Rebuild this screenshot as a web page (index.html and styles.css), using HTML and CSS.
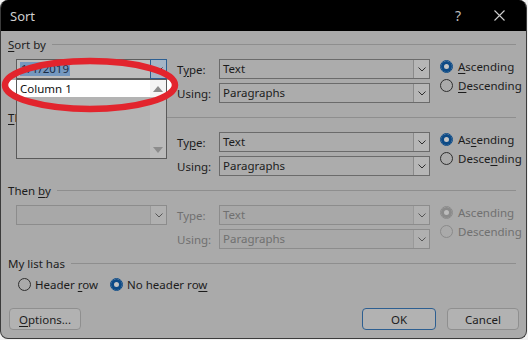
FILE: index.html
```html
<!DOCTYPE html>
<html lang="en">
  <head>
    <meta charset="UTF-8" />
    <title>Sort</title>
    <link rel="stylesheet" href="styles.css">
  </head>
  <body>
    <div class="window">
      <div class="titlebar">
        <span class="title">Sort</span>
        <span class="help">?</span>
        <svg class="close" width="11" height="11" viewBox="0 0 11 11">
          <path d="M0.5 0.5 L10.5 10.5 M10.5 0.5 L0.5 10.5" stroke="#cfcfcf" stroke-width="1.1" fill="none" />
        </svg>
      </div>

      <div class="content">
        <!-- sort by -->
        <div class="section">
          <div class="header"><span><u>S</u>ort by</span><i></i></div>
          <div class="body">
            <div class="dropdown open">
              <span class="value"><span class="sel">1/1/2019</span></span>
              <span class="arrow"><svg width="8" height="5" viewBox="0 0 8 5"><path d="M0.5 0.5 L4 4 L7.5 0.5" stroke="#2d2d2d" fill="none" /></svg></span>
              <div class="listbox">
                <div class="items">
                  <div class="item">Column 1</div>
                </div>
                <div class="scroll">
                  <span class="up"><svg width="10" height="6" viewBox="0 0 10 6"><path d="M0 6 L5 0 L10 6 Z" fill="#8c8c8c" /></svg></span>
                  <span class="down"><svg width="10" height="6" viewBox="0 0 10 6"><path d="M0 0 L5 6 L10 0 Z" fill="#8c8c8c" /></svg></span>
                </div>
              </div>
            </div>
            <span class="lbl r1">T<u>y</u>pe:</span>
            <div class="combo r1"><span class="value">Text</span><span class="arrow"><svg width="8" height="5" viewBox="0 0 8 5"><path d="M0.5 0.5 L4 4 L7.5 0.5" stroke="#2d2d2d" fill="none" /></svg></span></div>
            <div class="radios">
              <div class="radio"><span class="dot on"></span><span><u>A</u>scending</span></div>
              <div class="radio"><span class="dot"></span><span><u>D</u>escending</span></div>
            </div>
            <span class="lbl r2">Using:</span>
            <div class="combo r2"><span class="value">Paragraphs</span><span class="arrow"><svg width="8" height="5" viewBox="0 0 8 5"><path d="M0.5 0.5 L4 4 L7.5 0.5" stroke="#2d2d2d" fill="none" /></svg></span></div>
          </div>
        </div>

        <!-- then by -->
        <div class="section">
          <div class="header"><span><u>T</u>hen by</span><i></i></div>
          <div class="body">
            <div class="dropdown"><span class="value"></span><span class="arrow"></span></div>
            <span class="lbl r1">Ty<u>p</u>e:</span>
            <div class="combo r1"><span class="value">Text</span><span class="arrow"><svg width="8" height="5" viewBox="0 0 8 5"><path d="M0.5 0.5 L4 4 L7.5 0.5" stroke="#2d2d2d" fill="none" /></svg></span></div>
            <div class="radios">
              <div class="radio"><span class="dot on"></span><span>As<u>c</u>ending</span></div>
              <div class="radio"><span class="dot"></span><span>Desce<u>n</u>ding</span></div>
            </div>
            <span class="lbl r2">Using:</span>
            <div class="combo r2"><span class="value">Paragraphs</span><span class="arrow"><svg width="8" height="5" viewBox="0 0 8 5"><path d="M0.5 0.5 L4 4 L7.5 0.5" stroke="#2d2d2d" fill="none" /></svg></span></div>
          </div>
        </div>

        <!-- then by (disabled) -->
        <div class="section disabled">
          <div class="header"><span>Then <u>b</u>y</span><i></i></div>
          <div class="body">
            <div class="dropdown"><span class="value"></span><span class="arrow"><svg width="8" height="5" viewBox="0 0 8 5"><path d="M0.5 0.5 L4 4 L7.5 0.5" stroke="#555" fill="none" /></svg></span></div>
            <span class="lbl r1">Type:</span>
            <div class="combo r1"><span class="value">Text</span><span class="arrow"><svg width="8" height="5" viewBox="0 0 8 5"><path d="M0.5 0.5 L4 4 L7.5 0.5" stroke="#555" fill="none" /></svg></span></div>
            <div class="radios">
              <div class="radio"><span class="dot on"></span><span>Ascending</span></div>
              <div class="radio"><span class="dot"></span><span>Descending</span></div>
            </div>
            <span class="lbl r2">Using:</span>
            <div class="combo r2"><span class="value">Paragraphs</span><span class="arrow"><svg width="8" height="5" viewBox="0 0 8 5"><path d="M0.5 0.5 L4 4 L7.5 0.5" stroke="#555" fill="none" /></svg></span></div>
          </div>
        </div>

        <!-- my list has -->
        <div class="header"><span>My list has</span><i></i></div>
        <div class="listhas">
          <div class="radio"><span class="dot"></span><span>Header <u>r</u>ow</span></div>
          <div class="radio"><span class="dot on"></span><span>No header ro<u>w</u></span></div>
        </div>

        <div class="buttons">
          <button class="btn"><u>O</u>ptions...</button>
          <span class="spacer"></span>
          <button class="btn default">OK</button>
          <button class="btn">Cancel</button>
        </div>
      </div>

      <svg class="markup" width="528" height="340" viewBox="0 0 528 340">
        <defs>
          <clipPath id="inside"><ellipse cx="90" cy="85" rx="85" ry="24" /></clipPath>
        </defs>
        <g clip-path="url(#inside)" fill="#ffffff">
          <rect x="0" y="80" width="16" height="17" />
          <rect x="167" y="80" width="20" height="17" />
        </g>
        <ellipse cx="90" cy="85" rx="85" ry="24" fill="none" stroke="#e2242d" stroke-width="6.5" />
      </svg>
    </div>
  </body>
</html>
```

FILE: styles.css
```css
* {
  box-sizing: border-box;
}

html,
body {
  margin: 0;
  background: #f2f2f2;
}

body {
  font-family: "Segoe UI", "Noto Sans", sans-serif;
  font-size: 11.5px;
  color: #1c1c1c;
}

u {
  text-decoration-thickness: 1px;
  text-underline-offset: 2px;
}

.window {
  position: relative;
  width: 527px;
  height: 339px;
  background: #aaaaaa;
  border: 1px solid #3b3b3b;
  border-top: 0;
  border-radius: 8px;
  overflow: hidden;
  display: flex;
  flex-direction: column;
}

.titlebar {
  height: 31px;
  flex: none;
  background: #000;
  color: #cfcfcf;
  font-size: 13px;
  display: flex;
  align-items: center;
  padding-left: 9px;
}

.titlebar .help {
  margin-left: auto;
  font-size: 14px;
  color: #bdbdbd;
}

.titlebar .close {
  margin-left: 33px;
  margin-right: 21px;
}

.content {
  padding: 5px 10px 0 7px;
  display: flex;
  flex-direction: column;
}

.header {
  height: 16px;
  display: flex;
  align-items: center;
  gap: 6px;
  white-space: nowrap;
}

.header i {
  flex: 1;
  border-top: 1px solid #8e8e8e;
  margin-top: 1px;
}

.section {
  margin-bottom: 6px;
}

.body {
  margin-top: 7px;
  padding-left: 8px;
  display: grid;
  grid-template-columns: 151px 32px 211px auto;
  grid-template-rows: 20px 20px;
  column-gap: 10px;
  row-gap: 4px;
  align-items: center;
}

.lbl {
  grid-column: 2;
  white-space: nowrap;
}

.combo {
  grid-column: 3;
}

.r1 {
  grid-row: 1;
}

.r2 {
  grid-row: 2;
}

/* combo boxes */
.combo,
.dropdown {
  height: 20px;
  display: flex;
  align-items: stretch;
  border: 1px solid #6b6b6b;
  background: #acacac;
}

.combo .value,
.dropdown .value {
  flex: 1;
  padding-left: 3px;
  line-height: 18px;
  white-space: nowrap;
  overflow: hidden;
}

.arrow {
  width: 16px;
  margin: 0;
  border-left: 1px solid #8a8a8a;
  background: #b6b6b6;
  display: flex;
  align-items: center;
  justify-content: center;
}

.dropdown {
  position: relative;
  grid-column: 1;
  grid-row: 1;
}

.dropdown.open {
  background: #bdbdbd;
  border-color: #5d5d5d;
}

.dropdown.open .arrow {
  border: 1px solid #2c5f92;
  background: #a4b5c6;
  margin: -1px -1px -1px 0;
  width: 17px;
}

.sel {
  display: inline-block;
  background: #7598bf;
  color: #1a2c44;
  line-height: 14px;
  padding: 0 1px;
  margin-top: 2px;
}

.listbox {
  position: absolute;
  top: 19px;
  left: -1px;
  width: 151px;
  height: 80px;
  z-index: 2;
  background: #b3b3b3;
  border: 1px solid #5a5a5a;
  display: flex;
}

.items {
  flex: 1;
}

.item {
  height: 17px;
  line-height: 17px;
  padding-left: 3px;
  background: #fff;
  color: #111;
}

.scroll {
  width: 16px;
  background: #bababa;
  display: flex;
  flex-direction: column;
  justify-content: space-between;
  align-items: center;
}

.scroll .up {
  width: 16px;
  height: 17px;
  background: #f4f4f4;
  display: flex;
  align-items: center;
  justify-content: center;
}

.scroll .down {
  height: 17px;
  display: flex;
  align-items: center;
}

/* radios */
.radios {
  grid-column: 4;
  grid-row: 1 / span 2;
  align-self: start;
  margin-top: -2px;
}

.radio {
  height: 19px;
  display: flex;
  align-items: center;
  gap: 5px;
  white-space: nowrap;
}

.dot {
  width: 13px;
  height: 13px;
  flex: none;
  border-radius: 50%;
  border: 1px solid #2e2e2e;
}

.dot.on {
  border-color: #0c4a86;
  background: #c4c4c4;
  box-shadow: inset 0 0 0 3px #0c4a86;
}

/* disabled section */
.disabled .body {
  color: #707070;
}

.disabled .combo,
.disabled .dropdown {
  border-color: #8c8c8c;
  background: #a8a8a8;
}

.disabled .arrow {
  background: #b0b0b0;
  border-left-color: #999;
}

.disabled .dot {
  border-color: #8a8a8a;
}

.disabled .dot.on {
  background: #bcbcbc;
  box-shadow: inset 0 0 0 3px #8a8a8a;
}

/* my list has */
.listhas {
  margin-top: 5px;
  padding-left: 10px;
  display: flex;
  gap: 12px;
}

.listhas .radio {
  height: 16px;
  gap: 4px;
}

/* buttons */
.buttons {
  margin-top: 16px;
  margin-right: -3px;
  display: flex;
  gap: 11px;
}

.spacer {
  flex: 1;
}

.btn {
  width: 72px;
  height: 22px;
  font: inherit;
  color: #1c1c1c;
  background: #b2b2b2;
  border: 1px solid #8f8f8f;
  border-radius: 4px;
  padding: 0;
}

.btn:first-child {
  margin-left: 1px;
}

.btn.default {
  width: 74px;
  border-color: #2d5f91;
}

.markup {
  position: absolute;
  top: 0;
  left: -1px;
  z-index: 5;
  pointer-events: none;
}
```
